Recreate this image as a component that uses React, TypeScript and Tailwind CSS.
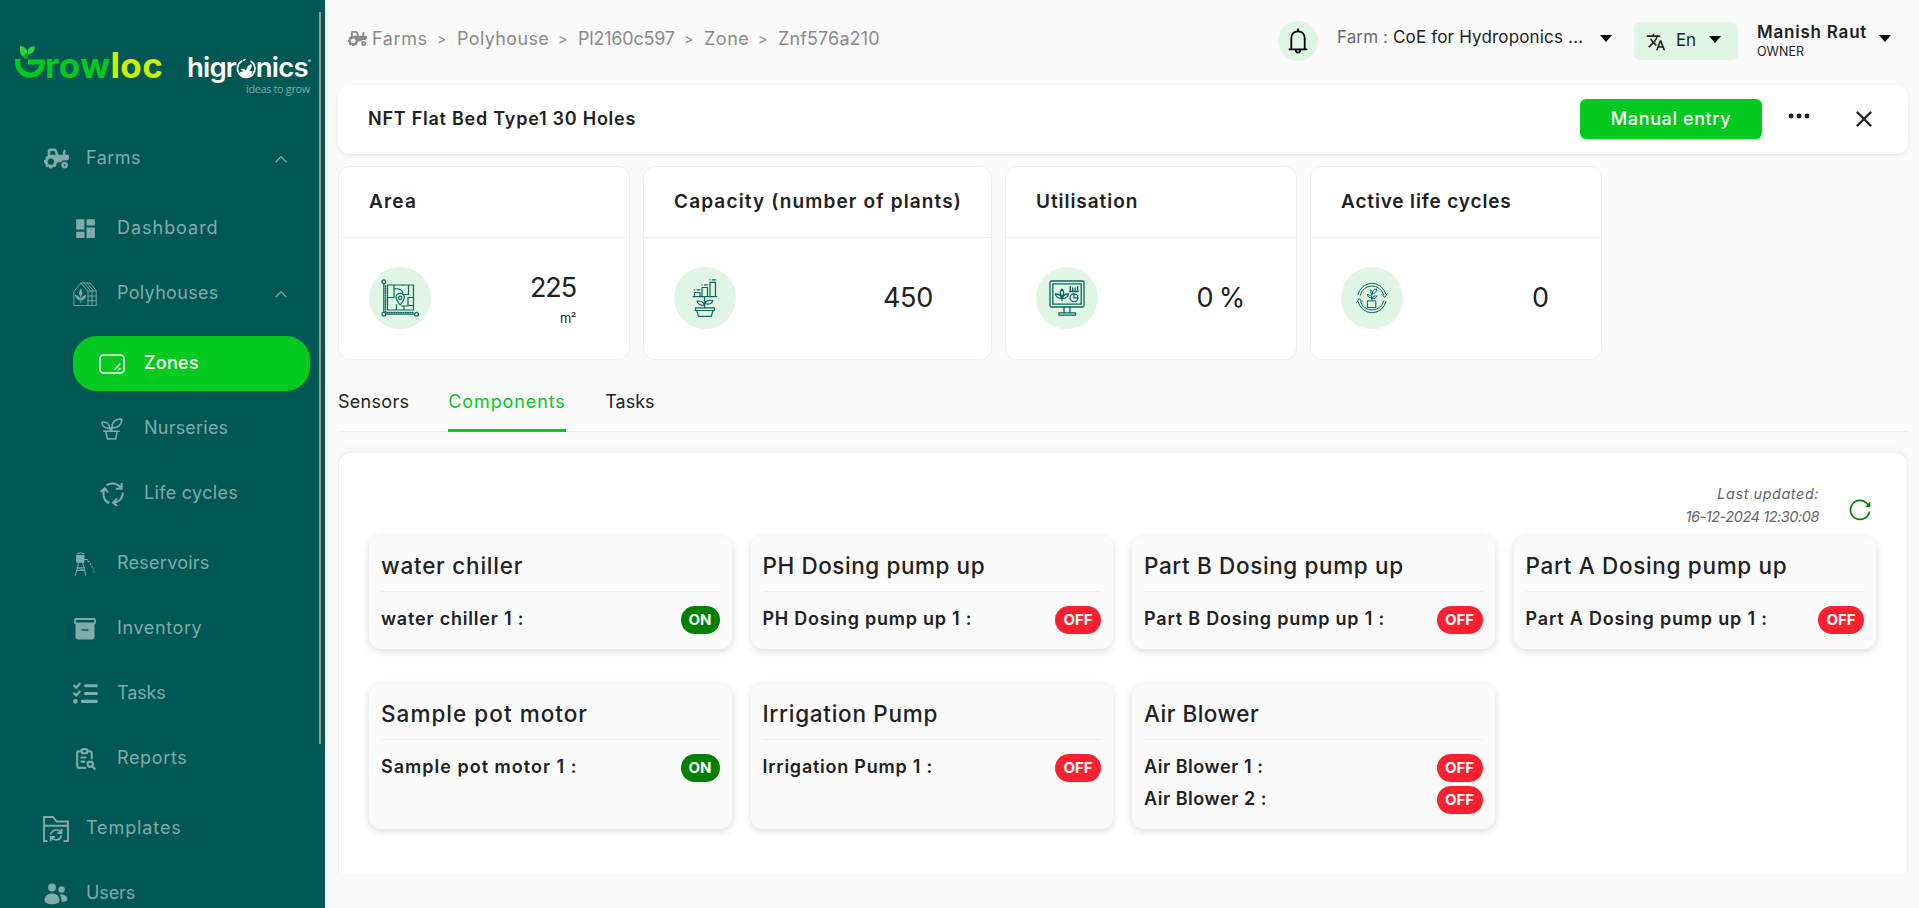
import type { ReactNode } from "react";
import { FaTractor, FaListCheck } from "react-icons/fa6";
import { MdDashboard, MdTranslate } from "react-icons/md";
import { TbReportSearch } from "react-icons/tb";

const stroke = {
  fill: "none",
  stroke: "currentColor",
  strokeLinecap: "round" as const,
  strokeLinejoin: "round" as const,
};

/* ---------- sidebar icons ---------- */

function PolyhouseIcon() {
  return (
    <svg width="24" height="24" viewBox="0 0 24 24" {...stroke} strokeWidth=".9">
      <path d="M.8 23.2V9.500L8 1h9l6.200 7.500v14.700z" />
      <path d="M8 1l7 8.500v13.700M15 9h8M15 14h8M15 18.700h8M19 9v14M11 1l7 8M14 1l6.500 8" />
      <path d="M7.800 7.500c-1.600 2.500-1.800 4.500-.1 7 1.700-2.500 1.500-4.500.1-7z" fill="currentColor" />
      <path d="M2.800 13.500c.2 2.600 1.500 4.200 4.200 4.500-.2-2.600-1.700-4.100-4.200-4.500zM12.600 13.500c-.2 2.600-1.500 4.200-4.200 4.500.2-2.600 1.700-4.100 4.200-4.500z" fill="currentColor" />
      <path d="M7.700 15v5.500" />
    </svg>
  );
}

function ZoneIcon() {
  return (
    <svg width="26" height="20" viewBox="0 0 26 20" {...stroke} strokeWidth="1.600">
      <rect x="1" y="1" width="24" height="18" rx="3.500" />
      <path d="M15.800 15.500l5-5.500M20 15.600l1-1.100" strokeWidth="1.500" />
    </svg>
  );
}

function NurseryIcon() {
  return (
    <svg width="22" height="22" viewBox="0 0 22 22" {...stroke} strokeWidth="1.500">
      <path d="M2.800 13.200h15.400M4.800 13.400l1.600 7.600h8.200l1.600-7.600" />
      <path d="M1 4.200c4.500-.5 7.600 1.600 7.800 6C4.500 10.400 1.200 8.500 1 4.200z" />
      <path d="M20.800 1c-6-.2-9.900 2.400-10 8.800 6 .5 10-2.600 10-8.800zM8.800 10.200l.7 2.800M10.800 9.800v3" />
    </svg>
  );
}

function LifeCycleIcon() {
  return (
    <svg width="24" height="24" viewBox="0 0 24 24" {...stroke} strokeWidth="2" strokeLinecap="butt" strokeLinejoin="miter">
      <path d="M6.300 3.200C11 .3 17 1 20.800 5.500M21.600 1v5.800h-5.800" />
      <path d="M22.600 10.500c.6 5-2.800 9.500-8.300 10.300M17.200 16.600l-4.200 4 4.200 3.300" />
      <path d="M9.300 21C4.500 19.500 2.200 14 4.300 7.300M.6 9.900l4.200-3.700 3.200 4.300" />
    </svg>
  );
}

function ReservoirIcon() {
  return (
    <svg width="22" height="24" viewBox="0 0 22 24" {...stroke} strokeWidth="1">
      <path d="M3 3.300h7v7H3z" fill="currentColor" />
      <path d="M2.800 1.700Q6.500-.2 10.200 1.700M4.500 10.500L3.500 16 1.300 23.300M8.500 10.500l1.600 5.500 1.700 7.300M3 15.800h7.500M2.500 18.400h8.300M4 16l5.500 2.200" />
      <path d="M10.500 7.500h3M13.500 9l1.500.7M16.500 11.800l.2.700M18 14.500l.2.500M19.500 17h.3M20 19.500v.3" strokeWidth="1.200" />
    </svg>
  );
}

function InventoryIcon() {
  return (
    <svg width="22" height="22" viewBox="0 0 22 22" {...stroke}>
      <rect x="1" y="1" width="20" height="4.500" rx="1" strokeWidth="1.800" />
      <path d="M1.500 6h19v13a2.500 2.500 0 01-2.500 2.500H4A2.500 2.500 0 011.500 19z" fill="currentColor" stroke="none" />
      <path d="M8.200 12h5.600" stroke="#005753" strokeWidth="1.600" />
    </svg>
  );
}

function TemplatesIcon() {
  return (
    <svg width="26" height="26" viewBox="0 0 26 26" {...stroke} strokeWidth="1.900" strokeLinecap="butt" strokeLinejoin="miter">
      <path d="M4.500 25H1V1h9l3.600 4.500H25V25h-4.500M1 9.800h24" />
      <path d="M7.800 18.500c.8-5 7-6 10.300-2.200M18.600 12.800v4.300h-4.300M18.400 19.300c-.8 5-7 6-10.300 2.200M7.700 25.300V21h4.300" strokeWidth="1.800" />
    </svg>
  );
}

function UsersIcon() {
  return (
    <svg width="24" height="22" viewBox="0 0 24 22" fill="currentColor">
      <circle cx="8" cy="4.500" r="3.900" />
      <circle cx="17.600" cy="6.500" r="3.200" />
      <path d="M.5 17.500C.5 13 3.800 10.500 8 10.500s7.500 2.500 7.500 7C15.500 20 12 21.300 8 21.300S.5 20 .5 17.500z" />
      <path d="M15.700 11.800c3.800-.8 7.600 1.200 7.800 4.700 0 1.900-2.700 2.400-6 2.300.2-2.500-.3-5-1.800-7z" />
    </svg>
  );
}

function Chevron() {
  return (
    <svg width="12" height="8" viewBox="0 0 12 8" {...stroke} strokeWidth="1.300" className="mr-[38px] ml-auto">
      <path d="M1 6.800L6 1.600l5 5.200" />
    </svg>
  );
}

function Caret({ className = "" }: { className?: string }) {
  return (
    <svg width="12" height="7" viewBox="0 0 12 7" className={className}>
      <path d="M0 0h12L6 7z" fill="#000" />
    </svg>
  );
}

/* ---------- stat icons ---------- */

function AreaIcon() {
  return (
    <svg width="38" height="38" viewBox="0 0 38 38" {...stroke} strokeWidth="1.200">
      <circle cx="2.800" cy="2.800" r="1.900" />
      <circle cx="2.800" cy="35.200" r="1.900" />
      <circle cx="35.500" cy="35.200" r="1.900" />
      <path d="M2.800 4.800v28.300M4.800 35.200h28.500" />
      <path d="M4.500 7v26" strokeDasharray=".6 1.700" strokeWidth="1.600" />
      <path d="M6 33.600h27" strokeDasharray=".6 1.700" strokeWidth="1.600" />
      <path d="M6.500 6h26v25h-26zM13 6v12.500H6.500M13 9.500c5 0 8.500 1 9 4.500M22 6v.5M27.500 6v9.500H23M32.500 18.500H27v8h5.500M15.500 31v-5.500M23 27v4M20.500 27H27" />
      <path d="M19.200 26c-3-3.800-4.200-5.600-4.200-7.500a4.200 4.200 0 018.400 0c0 1.900-1.200 3.700-4.200 7.500z" fill="#e0f5e4" />
      <circle cx="19.200" cy="18.800" r="1.700" />
    </svg>
  );
}

function CapacityIcon() {
  return (
    <svg width="26" height="38" viewBox="0 0 26 38" {...stroke} strokeWidth="1.200">
      <path d="M1 17.600h23.500M2.500 17.500v-4h5.500v4M10 17.500V8.500h5.500v9M18 17.500V3.300h5.500v14.200" />
      <path d="M2.500 10.800h.2M5 10.800h3M10 5.800h.2M12.500 5.800h3M17.800.8h.2M20.300.8h3.200" />
      <path d="M12.700 17.800V29M12.500 26.500c-2.500 0-6.500-.5-7.500-4.300 3.500-.7 6.800.5 7.500 4.300zM13 24.500c.5-2.800 4-3.700 7.800-3-.8 3.300-4 4.500-7.800 3z" />
      <path d="M3.500 28.800h18.800v2.700H3.500zM4.800 31.500l1.700 5.900h12.800l1.700-5.900M15.500 31.500h2" />
    </svg>
  );
}

function UtilisationIcon() {
  return (
    <svg width="36" height="36" viewBox="0 0 36 36" {...stroke} strokeWidth="1.300">
      <rect x="1" y="1" width="34" height="26" rx="1.500" />
      <rect x="3.800" y="3.800" width="28.400" height="20.400" />
      <path d="M15 27v6M21 27v6M10 32.800h16.500v2.400H10z" />
      <path d="M13 20.500V17M13 9c-2 2.300-2 5.300 0 7.500 2-2.200 2-5.200 0-7.500zM6.500 14c.5 3 2.500 4.500 6 4.200-.3-2.700-2.500-4.200-6-4.200zM19.500 14c-.5 3-2.500 4.500-6 4.200.3-2.700 2.500-4.200 6-4.200z" />
      <path d="M20.500 11.500h8.800M21.300 11V6.500M23.700 11V8M26.200 11V8M28.700 11V6.500" />
      <circle cx="25" cy="17.800" r="3.900" />
      <path d="M25 14v3.800h3.900" />
    </svg>
  );
}

function LifeIcon() {
  return (
    <svg width="32" height="32" viewBox="0 0 32 32" {...stroke} strokeWidth="1">
      <path d="M2 12.500A14.300 14.300 0 0129.800 12M4.200 13A12.200 12.200 0 0127.600 12.500M30 19.500A14.300 14.300 0 012.200 20M27.800 19A12.200 12.200 0 014.400 19.500" />
      <path d="M26 12.500l2.800 3 2.400-4M6 19.500l-2.800-3-2.400 4" />
      <path d="M11.800 18.800h8v6.700h-8z" />
      <path d="M15.800 18.500v-5M15.800 16c-2.500 0-4.300-1.300-4.500-3.500 2.500 0 4.300 1.200 4.500 3.500zM16 12c0-2.700 1.500-4.700 4.700-5 0 2.800-1.800 4.800-4.700 5zM16.300 16.500c.5-2.200 2.200-3 4.500-2.600-.5 2-2 3-4.500 2.600zM15.800 12c-1.500-1-1.800-2.200-.8-3.800 1.600 1.200 1.900 2.200.8 3.800z" />
    </svg>
  );
}

/* ---------- sidebar ---------- */

type Item = { label: string; track?: string; icon: ReactNode };

const sizes = {
  top: "pl-[43px] gap-[17px]",
  sub: "pl-[72px] gap-[19px]",
  leaf: "ml-[73px] mr-[15px] pl-[26px] gap-[19px] rounded-[24px]",
};

function NavItem({ item, level, active, open }: { item: Item; level: keyof typeof sizes; active?: boolean; open?: boolean }) {
  return (
    <a className={`flex h-[55px] shrink-0 items-center ${sizes[level]} ${active ? "bg-[#04c91e] font-medium text-white" : "text-[#80abaa]"}`}>
      <span className="flex w-[26px] shrink-0 justify-center">{item.icon}</span>
      <span className={`pb-0.5 ${item.track}`}>{item.label}</span>
      {open && <Chevron />}
    </a>
  );
}

function Logos() {
  return (
    <div className="flex h-[130px] shrink-0 pl-[15px]">
      <div className="flex w-[147px] shrink-0 pt-[45px]">
        <svg width="30" height="34" viewBox="0 0 30 34" className="shrink-0">
          <path d="M2.700 13v4.500a12.300 12.300 0 0024.600-1.500H13" fill="none" stroke="#04c91e" strokeWidth="5.200" />
          <path d="M5 0c4.500.3 7 2.500 7.300 7v5C8 11.500 5 9 5 4.500z" fill="#2fd04a" />
          <path d="M19.500 0c-4 .2-6.500 2-6.800 6v2.500c4-.4 6.800-2.500 6.800-6z" fill="#2fd04a" />
          <path d="M12.300 7v6H9.500l-2-3z" fill="#07a81d" />
        </svg>
        <span className="-mt-px text-[35px] leading-[41px] font-bold tracking-[0.012em] text-[#04c91e]">
          row<span className="text-[#c8f000]">loc</span>
        </span>
      </div>
      <div className="ml-[25px] flex w-[126px] flex-col pt-[50px]">
        <div className="flex h-[32px] items-center text-[27.500px] leading-[32px] font-semibold tracking-[-0.03em] text-white">
          higr
          <svg width="20" height="22" viewBox="0 0 20 22" className="mt-[4px] shrink-0">
            <path d="M6.500 2.800a8.700 8.700 0 108 .3" fill="none" stroke="#fff" strokeWidth="1.700" />
            <path d="M4.500 11c2.500-.5 4.500 0 5.500 1.500C10.800 9 12.500 7 15.500 6c.5 3-.3 5-2 7h3c-1 3.800-3.500 6.200-6.500 6.200s-5.500-2-6.200-5.200l3.700-.5z" fill="#fff" />
            <path d="M7 2.600l2.500-1.400" stroke="#fff" strokeWidth="1.500" />
          </svg>
          nics
          <span className="mb-3 text-[5px] leading-none font-normal">®</span>
        </div>
        <span className="-mt-0.5 pl-[59px] font-['Open_Sans'] text-[11px] leading-[15px] tracking-[-0.035em] whitespace-nowrap text-[#80abaa]">ideas to grow</span>
      </div>
    </div>
  );
}

function Sidebar() {
  return (
    <aside className="flex h-full w-[325px] shrink-0 overflow-hidden bg-[#005753]">
      <div className="flex w-[325px] shrink-0 flex-col pt-px text-[18px]">
        <Logos />
        <NavItem level="top" open item={{ label: "Farms", track: "tracking-[0.026em]", icon: <FaTractor size={25} /> }} />
        <div className="my-[15px] flex flex-col gap-[10px]">
          <NavItem level="sub" item={{ label: "Dashboard", track: "tracking-[0.054em]", icon: <MdDashboard size={25} /> }} />
          <NavItem level="sub" open item={{ label: "Polyhouses", track: "tracking-[0.018em]", icon: <PolyhouseIcon /> }} />
          <div className="my-[5px] flex flex-col gap-[10px]">
            <NavItem level="leaf" active item={{ label: "Zones", track: "tracking-[0.016em]", icon: <ZoneIcon /> }} />
            <NavItem level="leaf" item={{ label: "Nurseries", track: "tracking-[0.012em]", icon: <NurseryIcon /> }} />
            <NavItem level="leaf" item={{ label: "Life cycles", track: "tracking-[0.018em]", icon: <LifeCycleIcon /> }} />
          </div>
          <NavItem level="sub" item={{ label: "Reservoirs", track: "tracking-[0.014em]", icon: <ReservoirIcon /> }} />
          <NavItem level="sub" item={{ label: "Inventory", track: "tracking-[0.034em]", icon: <InventoryIcon /> }} />
          <NavItem level="sub" item={{ label: "Tasks", track: "tracking-[-0.006em]", icon: <FaListCheck size={25} /> }} />
          <NavItem level="sub" item={{ label: "Reports", track: "tracking-[0.036em]", icon: <TbReportSearch size={25} /> }} />
        </div>
        <NavItem level="top" item={{ label: "Templates", track: "tracking-[0.05em]", icon: <TemplatesIcon /> }} />
        <div className="mt-[10px]">
          <NavItem level="top" item={{ label: "Users", track: "tracking-[-0.006em]", icon: <UsersIcon /> }} />
        </div>
      </div>
      <div className="mt-3 -ml-1.5 h-[732px] w-0.5 shrink-0 bg-[#999999]" />
    </aside>
  );
}

/* ---------- header ---------- */

const crumbs = [
  { label: "Polyhouse", cls: "ml-[11px] w-[93px] tracking-[0.02em]" },
  { label: "Pl2160c597", cls: "ml-[11px] w-[98px] tracking-[-0.012em]" },
  { label: "Zone", cls: "ml-[11px] w-[46px] tracking-[0.03em]" },
  { label: "Znf576a210", cls: "ml-[11px] w-[102px] tracking-[0.007em]" },
];

function Header() {
  return (
    <header className="flex h-[85px] shrink-0 items-start whitespace-nowrap text-[#212121]">
      <nav className="mt-[25px] ml-[10px] flex items-center text-[18px] leading-[27px] text-[#8a8a8a]">
        <FaTractor size={19} />
        <span className="ml-[5px] w-[57px] tracking-[0.034em]">Farms</span>
        {crumbs.map((c) => (
          <span key={c.label} className="flex items-center">
            <span className="ml-[8px] w-[9px] text-[14px]">&gt;</span>
            <span className={c.cls}>{c.label}</span>
          </span>
        ))}
      </nav>

      <div className="mt-[21px] ml-auto flex size-10 items-center justify-center rounded-full bg-[#e0f5e4] text-black">
        <svg width="20" height="26" viewBox="0 0 20 26" {...stroke} strokeWidth="1.800">
          <path d="M1.500 21.300h17M3.300 21V10.500C3.300 6 6 3.300 10 3.300s6.700 2.700 6.700 7.200V21M10 3V1.200M7.700 22c.2 3.500 4.400 3.500 4.600 0" />
        </svg>
      </div>
      <div className="mt-[25px] ml-[19px] flex items-center text-[17px] leading-6">
        <span className="w-[56px] tracking-[0.006em] text-[#6b6b6b]">Farm :</span>
        <span className="w-[207px] tracking-[0.01em]">CoE for Hydroponics ...</span>
        <Caret className="mt-0.5" />
      </div>
      <div className="mt-[22px] ml-[22px] flex h-[38px] w-[104px] items-center rounded-md bg-[#e0f5e4] pl-[12px] text-[17px]">
        <MdTranslate size={20} className="mt-0.5" />
        <span className="ml-[10px] w-[33px] tracking-[-0.02em]">En</span>
        <Caret className="-mt-1" />
      </div>
      <div className="mt-[20px] ml-[19px] flex">
        <div className="flex w-[122px] flex-col">
          <span className="text-[17px] leading-6 font-semibold tracking-[0.046em]">Manish Raut</span>
          <span className="text-[12.500px] leading-[15px] tracking-[0.005em]">OWNER</span>
        </div>
        <Caret className="mt-[15px] mr-[17px]" />
      </div>
    </header>
  );
}

/* ---------- content ---------- */

function TitleBar() {
  return (
    <section className="flex h-[69px] shrink-0 items-center rounded-xl bg-white pr-[36px] pb-0.5 pl-[30px] text-[#212121] shadow-[0_2px_4px_rgba(0,0,0,0.08)]">
      <h1 className="text-[18px] leading-6 font-semibold tracking-[0.042em]">NFT Flat Bed Type1 30 Holes</h1>
      <button className="mt-px ml-auto h-10 w-[182px] rounded-md bg-[#04c91e] pb-px text-[18px] font-medium tracking-[0.034em] text-white">Manual entry</button>
      <svg width="22" height="6" viewBox="0 0 22 6" className="-mt-1.5 ml-[26px]">
        <circle cx="3" cy="3" r="2.400" fill="#212121" />
        <circle cx="11" cy="3" r="2.400" fill="#212121" />
        <circle cx="19" cy="3" r="2.400" fill="#212121" />
      </svg>
      <svg width="16" height="16" viewBox="0 0 16 16" className="ml-[46px]" {...stroke} strokeWidth="2.400">
        <path d="M1.500 1.500l13 13M14.500 1.500l-13 13" />
      </svg>
    </section>
  );
}

type Stat = { title: string; track: string; width: string; pad: string; value: string; valueTrack: string; unit?: string; icon: ReactNode };

const stats: Stat[] = [
  { title: "Area", track: "tracking-[0.062em]", width: "w-[292px]", pad: "pr-[53px]", value: "225", valueTrack: "tracking-[-0.04em]", unit: "m²", icon: <AreaIcon /> },
  { title: "Capacity (number of plants)", track: "tracking-[0.06em]", width: "w-[349px]", pad: "pr-[58px]", value: "450", valueTrack: "tracking-[-0.01em]", icon: <CapacityIcon /> },
  { title: "Utilisation", track: "tracking-[0.05em]", width: "w-[292px]", pad: "pr-[52px]", value: "0 %", valueTrack: "tracking-[-0.045em]", icon: <UtilisationIcon /> },
  { title: "Active life cycles", track: "tracking-[0.045em]", width: "w-[292px]", pad: "pr-[52px]", value: "0", valueTrack: "", icon: <LifeIcon /> },
];

function Stats() {
  return (
    <div className="mt-3 flex h-[194px] shrink-0 gap-[13px] text-[#212121]">
      {stats.map((s) => (
        <section key={s.title} className={`flex flex-col rounded-xl border border-[#eeeeee] bg-white ${s.width}`}>
          <h2 className={`flex h-[71px] shrink-0 items-center border-b border-[#eeeeee] pl-[30px] text-[19px] font-semibold whitespace-nowrap ${s.track}`}>{s.title}</h2>
          <div className={`flex flex-1 items-center justify-between pb-0.5 pl-[30px] ${s.pad}`}>
            <span className="flex size-[62px] items-center justify-center rounded-full bg-[#e0f5e4] text-[#0a6661]">{s.icon}</span>
            <span className="flex flex-col items-end">
              <span className={`text-[27px] leading-8 ${s.valueTrack}`}>{s.value}</span>
              {s.unit && <span className="mt-0.5 -mb-1.5 text-[13px] leading-6 tracking-[-0.04em]">{s.unit}</span>}
            </span>
          </div>
        </section>
      ))}
    </div>
  );
}

function Tabs() {
  return (
    <div className="mt-[15px] flex h-[57px] shrink-0 gap-[39px] border-b border-[#eeeeee] text-[18px] text-[#212121]">
      <span className="flex h-[53px] items-center tracking-[0.016em]">Sensors</span>
      <span className="flex h-[57px] w-[118px] items-center border-b-3 border-[#04c91e] pb-px tracking-[0.05em] whitespace-nowrap text-[#04c91e]">Components</span>
      <span className="flex h-[53px] items-center">Tasks</span>
    </div>
  );
}

type Device = { title: string; track: string; rowTrack: string; rows: { n: number; on?: boolean }[] };

const devices: Device[] = [
  { title: "water chiller", track: "tracking-[0.034em]", rowTrack: "tracking-[0.044em]", rows: [{ n: 1, on: true }] },
  { title: "PH Dosing pump up", track: "tracking-[0.025em]", rowTrack: "tracking-[0.042em]", rows: [{ n: 1 }] },
  { title: "Part B Dosing pump up", track: "tracking-[0.028em]", rowTrack: "tracking-[0.045em]", rows: [{ n: 1 }] },
  { title: "Part A Dosing pump up", track: "tracking-[0.03em]", rowTrack: "tracking-[0.045em]", rows: [{ n: 1 }] },
  { title: "Sample pot motor", track: "tracking-[0.046em]", rowTrack: "tracking-[0.056em]", rows: [{ n: 1, on: true }] },
  { title: "Irrigation Pump", track: "tracking-[0.032em]", rowTrack: "tracking-[0.042em]", rows: [{ n: 1 }] },
  { title: "Air Blower", track: "tracking-[0.022em]", rowTrack: "tracking-[0.03em]", rows: [{ n: 1 }, { n: 2 }] },
];

function DeviceCard({ d }: { d: Device }) {
  return (
    <article className="rounded-xl bg-[#fafafa] px-3 pb-[15px] shadow-[0_2px_8px_rgba(0,0,0,0.15)]">
      <h3 className={`flex h-[56px] items-center border-b border-[#eeeeee] pt-1 text-[22.500px] font-medium whitespace-nowrap ${d.track}`}>{d.title}</h3>
      <div className="flex flex-col gap-1 pt-[14px]">
        {d.rows.map((r) => (
          <div key={r.n} className="flex h-7 items-center justify-between">
            <span className={`pb-0.5 text-[18px] leading-6 font-semibold whitespace-nowrap ${d.rowTrack}`}>
              {d.title} {r.n} :
            </span>
            <span className={`flex h-7 items-center justify-center rounded-[14px] text-[15px] font-bold text-white ${r.on ? "w-[39px] bg-[#008000]" : "w-[46px] bg-[#f9202f]"}`}>
              {r.on ? "ON" : "OFF"}
            </span>
          </div>
        ))}
      </div>
    </article>
  );
}

function Components() {
  return (
    <div className="mt-[5px] h-[436px] shrink-0 overflow-hidden pt-[15px]">
      <section className="h-[440px] rounded-xl border border-[#eeeeee] bg-white px-[30px] text-[#212121] shadow-[0_0_8px_rgba(0,0,0,0.08)]">
        <div className="flex h-[83px] items-start justify-end pt-[29px] pr-[6px]">
          <p className="flex flex-col items-end text-[14.500px] leading-[23px] text-[#666666] italic">
            <span className="tracking-[0.036em]">Last updated:</span>
            <span className="tracking-[-0.03em]">16-12-2024 12:30:08</span>
          </p>
          <svg width="22" height="22" viewBox="0 0 22 22" {...stroke} strokeWidth="1.700" className="mt-[17px] ml-[30px] text-[#008000]">
            <path d="M20.200 13.200A9.500 9.500 0 1118 4.500l1.500 1.800" />
            <path d="M21.400 2.600v5.300h-5.300z" fill="currentColor" stroke="none" />
          </svg>
        </div>
        <div className="grid grid-cols-4 gap-x-[19px] gap-y-[35px] pr-px">
          {devices.map((d) => (
            <DeviceCard key={d.title} d={d} />
          ))}
        </div>
      </section>
    </div>
  );
}

export default function App() {
  return (
    <div className="flex h-[908px] w-full overflow-hidden bg-[#fafafa] font-['Inter','Open_Sans',sans-serif]">
      <Sidebar />
      <main className="flex min-w-0 flex-1 flex-col pr-[11px] pl-[13px]">
        <Header />
        <TitleBar />
        <Stats />
        <Tabs />
        <Components />
      </main>
    </div>
  );
}
